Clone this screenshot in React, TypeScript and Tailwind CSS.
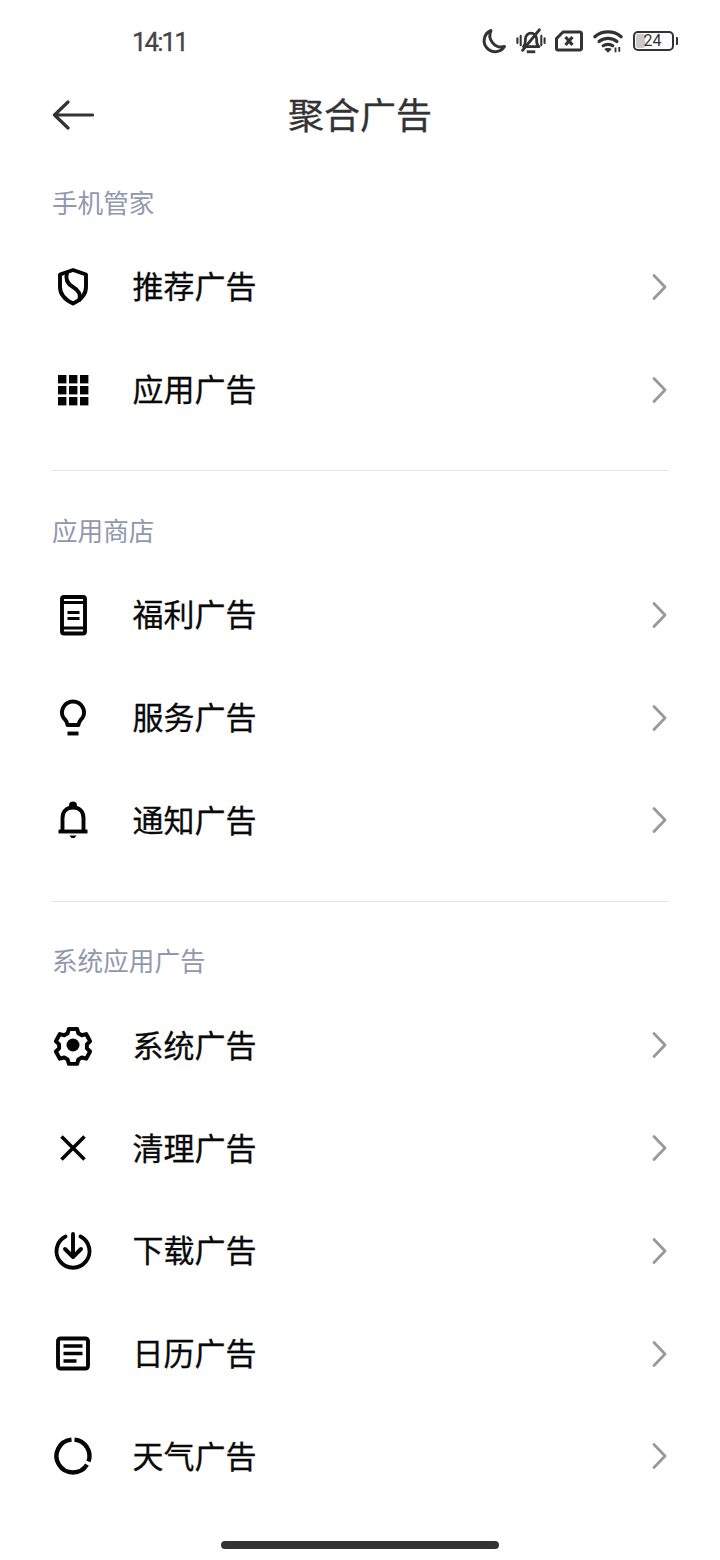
import type { ReactNode } from 'react'

const CJK_FONT = 'font-["Noto_Sans_CJK_SC","Noto_Sans",sans-serif]'

// Shared stroke props for the 42px row icons
const line = {
  fill: 'none',
  stroke: '#050505',
  strokeWidth: 3.9,
  strokeLinecap: 'round' as const,
  strokeLinejoin: 'round' as const,
}

function RowIcon({ children }: { children: ReactNode }) {
  return (
    <svg viewBox="0 0 42 42" className="h-[42px] w-[42px] shrink-0">
      {children}
    </svg>
  )
}

const ShieldIcon = (
  <RowIcon>
    <path {...line} d="M21 4 34 8.500v12.500c0 8-5.500 13-13 16.500C13.500 34 8 29 8 21V8.500Z" />
    <path {...line} d="M15 7c-2 6.500 0 10.500 6 14 6 3.500 8 7.500 6.500 13" />
  </RowIcon>
)

const GridIcon = (
  <RowIcon>
    <g fill="#050505">
      {[6, 17, 28].map((y) =>
        [6, 17, 28].map((x) => <rect key={`${x}-${y}`} x={x} y={y} width="8.400" height="8.400" />),
      )}
    </g>
  </RowIcon>
)

const PhoneIcon = (
  <RowIcon>
    <rect {...line} x="10" y="3" width="23" height="36.500" rx="2" />
    <path {...line} strokeWidth={3.2} strokeLinecap="butt" d="M10 8.500h23M10 34h23M15.500 18.500h12M15.500 24.500h12" />
  </RowIcon>
)

const BulbIcon = (
  <RowIcon>
    <path {...line} d="M15.500 28c0-4-2.500-5-4.500-8C8 14 12 4.500 21 4.500S34 14 31 20c-2 3-4.500 4-4.500 8Z" />
    <path {...line} strokeLinecap="butt" d="M15.500 36.500h11" />
  </RowIcon>
)

const BellIcon = (
  <RowIcon>
    <path {...line} d="M10.500 31V19c0-7 4.500-10.500 10.500-10.500S31.500 12 31.500 19v12" />
    <path {...line} strokeLinecap="butt" d="M6.500 32.500h29" />
    <path d="M21 2.500a4 4 0 0 1 4 4v3h-8v-3a4 4 0 0 1 4-4Z" fill="#050505" />
    <path d="M17.500 36.500h7l-2 2.500h-3Z" fill="#050505" />
  </RowIcon>
)

const GearIcon = (
  <RowIcon>
    <path
      {...line}
      strokeWidth={4.300}
      d="M16.500 3.500h9l1.300 4.800 3.700 2.100 4.800-1.300 4.300 7.800-3.500 3.400v4.400l3.500 3.400-4.300 7.800-4.800-1.300-3.700 2.100-1.300 4.800h-9l-1.300-4.800-3.700-2.100-4.800 1.300-4.300-7.800 3.500-3.400v-4.400l-3.500-3.400 4.300-7.800 4.800 1.300 3.700-2.100Z"
      transform="translate(21 21) scale(0.92) translate(-21 -21)"
    />
    <circle cx="21" cy="21" r="6.500" fill="#050505" />
  </RowIcon>
)

const CloseIcon = (
  <RowIcon>
    <path {...line} strokeWidth={3.600} strokeLinecap="butt" d="M9.500 9.500l23 23M32.500 9.500l-23 23" />
  </RowIcon>
)

const DownloadIcon = (
  <RowIcon>
    <path {...line} d="M13.500 6.500a16.500 16.500 0 1 0 15 0" />
    <path {...line} d="M21 4v23M13 19l8 8 8-8" />
  </RowIcon>
)

const NoteIcon = (
  <RowIcon>
    <rect {...line} x="6" y="5.500" width="30" height="30" rx="2.500" />
    <path {...line} strokeWidth={3.400} strokeLinecap="butt" d="M11.500 13h19M11.500 20.500h19M11.500 28h13" />
  </RowIcon>
)

const RingIcon = (
  <RowIcon>
    <g {...line} strokeLinecap="butt" strokeWidth={4.400}>
      <path d="M22.500 4.600A16.500 16.500 0 0 1 36.500 26.600" />
      <path d="M35 29.700A16.500 16.500 0 1 1 19.500 4.600" />
    </g>
  </RowIcon>
)

type Row = { icon: ReactNode; label: string }
type Section = { title: string; rows: Row[] }

const SECTIONS: Section[] = [
  {
    title: '手机管家',
    rows: [
      { icon: ShieldIcon, label: '推荐广告' },
      { icon: GridIcon, label: '应用广告' },
    ],
  },
  {
    title: '应用商店',
    rows: [
      { icon: PhoneIcon, label: '福利广告' },
      { icon: BulbIcon, label: '服务广告' },
      { icon: BellIcon, label: '通知广告' },
    ],
  },
  {
    title: '系统应用广告',
    rows: [
      { icon: GearIcon, label: '系统广告' },
      { icon: CloseIcon, label: '清理广告' },
      { icon: DownloadIcon, label: '下载广告' },
      { icon: NoteIcon, label: '日历广告' },
      { icon: RingIcon, label: '天气广告' },
    ],
  },
]

function StatusIcons() {
  const s = { fill: 'none', stroke: '#333', strokeWidth: 3, strokeLinecap: 'round' as const, strokeLinejoin: 'round' as const }
  return (
    <div className="flex items-center">
      {/* moon */}
      <svg viewBox="0 0 26 26" className="h-[26px] w-[26px]">
        <path {...s} d="M10 2.500A11 11 0 1 0 23.500 18.500 11.500 11.500 0 0 1 10 2.500Z" />
      </svg>
      {/* muted vibrate bell */}
      <svg viewBox="0 0 32 28" className="ml-[9px] h-[28px] w-[30px]">
        <path {...s} d="M8 20c2-2 2-4 2-8 0-4 3-6.500 6-6.500s6 2.500 6 6.500c0 4 0 6 2.500 8Z" />
        <path {...s} strokeWidth={3} strokeLinecap="butt" d="M11.500 25.500h9" />
        <path {...s} d="M7 24 25 2" />
        <path {...s} strokeWidth={2.200} d="M1.500 11v5M5 8.500v10M27 8.500v10M30.500 11v5" />
      </svg>
      {/* no sim */}
      <svg viewBox="0 0 28 22" className="ml-[9px] h-[22px] w-[28px]">
        <path {...s} d="M8 2h17a1.500 1.500 0 0 1 1.500 1.500v15A1.500 1.500 0 0 1 25 20H3a1.500 1.500 0 0 1-1.500-1.500V8.500Z" />
        <path {...s} strokeWidth={3.200} strokeLinecap="butt" d="m10.500 7 7 8M17.500 7l-7 8" />
      </svg>
      {/* wifi with activity arrows */}
      <svg viewBox="0 0 32 26" className="ml-[10px] h-[26px] w-[30px]">
        <path {...s} strokeWidth={3.400} d="M2 8.500c7.500-7 20.500-7 28 0M6.500 13.500c5-4.500 14-4.500 19 0M11 18c2.500-2 7.500-2 10 0" />
        <path d="M16 25.500l-4-4c2-1.300 6-1.300 8 0Z" fill="#333" />
        <path {...s} strokeWidth={2} strokeLinecap="butt" d="M24 20v5M28 19.500v5" />
      </svg>
      {/* battery */}
      <div className="ml-[10px] flex items-center">
        <div className="relative flex h-[20px] w-[41px] items-center justify-center rounded-[5px] border-2 border-[#333] pr-[2px]">
          <div className="absolute top-[1px] bottom-[1px] left-[1px] w-[9px] rounded-[2px] bg-[#c9c9c9]" />
          <span className='relative font-["Roboto",sans-serif] text-[16px] leading-none text-[#333]'>24</span>
        </div>
        <div className="ml-[2px] h-[8px] w-[2px] rounded-r-[1px] bg-[#333]" />
      </div>
    </div>
  )
}

export default function App() {
  return (
    <div className={`relative h-[1560px] w-[720px] overflow-hidden bg-white ${CJK_FONT}`}>
      {/* status bar */}
      <div className="flex h-[82px] items-center justify-between pr-[42px] pl-[132px]">
        <span className='pt-[2px] font-["Roboto",sans-serif] text-[26px] leading-none font-normal tracking-[-2px] text-[#444] [-webkit-text-stroke:0.3px_#444]'>14:11</span>
        <StatusIcons />
      </div>

      {/* title bar */}
      <div className="relative flex h-[66px] items-center justify-center">
        <svg viewBox="0 0 42 32" className="absolute top-[17px] left-[52px] h-[32px] w-[42px]">
          <path d="M40.500 16H3M16 3 2.500 16 16 29" fill="none" stroke="#333" strokeWidth="3.200" strokeLinecap="round" strokeLinejoin="round" />
        </svg>
        <h1 className="pb-[5px] text-[36px] leading-none font-normal text-[#333] [-webkit-text-stroke:0.3px_#333]">聚合广告</h1>
      </div>

      <div className="px-[52px] pt-[35px]">
        {SECTIONS.map((section, i) => (
          <section key={section.title}>
            {i > 0 && <div className="-mx-px mt-[29.300px] mb-[39.800px] h-px bg-[#e4e4e4]" />}
            <div className="flex h-[40px] items-center pb-[3px] text-[25.600px] leading-none text-[#9197ae]">{section.title}</div>
            <div className="mt-[12.500px]">
              {section.rows.map((row) => (
                <div key={row.label} className="flex h-[102.700px] items-center">
                  {row.icon}
                  <span className="ml-[38.500px] pb-[4px] text-[31px] leading-none font-normal text-[#0a0a0a] [-webkit-text-stroke:0.3px_#0a0a0a]">{row.label}</span>
                  <svg viewBox="0 0 18 30" className="ml-auto h-[30px] w-[18px]">
                    <path d="M4 3.500 15 15 4 26.500" fill="none" stroke="#999" strokeWidth="2.800" strokeLinecap="round" strokeLinejoin="round" />
                  </svg>
                </div>
              ))}
            </div>
          </section>
        ))}
      </div>

      {/* gesture pill */}
      <div className="absolute bottom-[11px] left-[221px] h-[8px] w-[278px] rounded-full bg-[#333]" />
    </div>
  )
}
